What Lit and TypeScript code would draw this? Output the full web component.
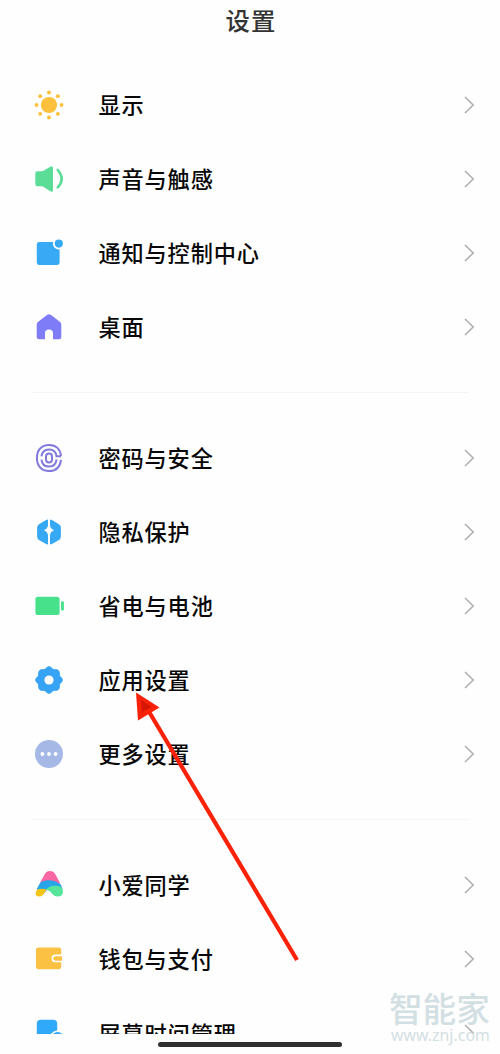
import { LitElement, html, svg, css } from "lit";
import { customElement, property } from "lit/decorators.js";

const gear = (() => {
  const pts: string[] = [];
  for (let i = 0; i < 96; i++) {
    const a = (i / 96) * Math.PI * 2;
    const r = 12.4 + 0.9 * Math.cos(8 * a);
    pts.push(`${(r * Math.cos(a)).toFixed(2)},${(r * Math.sin(a)).toFixed(2)}`);
  }
  return pts.join(" ");
})();

const icons: Record<string, unknown> = {
  display: svg`<g fill="#fcc03c"><circle r="8.1"/>${[0, 1, 2, 3, 4, 5, 6, 7].map(
    (i) => svg`<circle r="1.95" cx=${12.5 * Math.cos((i * Math.PI) / 4)} cy=${12.5 * Math.sin((i * Math.PI) / 4)}/>`
  )}</g>`,
  sound: svg`<path fill="#5bdd98" d="M-11.5-7.8H-6.5L1.3-12.3Q4-13.8 4-11V11Q4 13.8 1.3 12.3L-6.5 7.3H-11.5Q-13.7 7.3-13.7 5V-5.5Q-13.7-7.8-11.5-7.8Z"/>
    <path d="M8.8-9Q16.6 0 8.8 8.4" fill="none" stroke="#5bdd98" stroke-width="2.6" stroke-linecap="round"/>`,
  notify: svg`<rect x="-12.2" y="-11" width="22.8" height="23" rx="2.4" fill="#38a9f5"/>
    <circle cx="9.8" cy="-9.4" r="5.9" fill="#fff"/><circle cx="9.8" cy="-9.4" r="4.1" fill="#38a9f5"/>`,
  home: svg`<path fill="#7f7cf8" d="M-10.8-5.2L-2-12Q0-13.5 2-12L10.8-5.2Q12.3-4 12.3-2.2V9.8Q12.3 12.3 9.8 12.3H4V6Q4 2.4 0 2.4Q-4 2.4-4 6V12.3H-9.8Q-12.3 12.3-12.3 9.8V-2.2Q-12.3-4-10.8-5.2Z"/>`,
  finger: svg`<g fill="none" stroke="#8279dc" stroke-width="2">
    <path d="M12-1.8C11.4-8.8 7-13 0-13C-7.4-13-12.1-8-12.1 0S-7.4 13 0 13C6.8 13 11.2 9 12 1.8"/>
    <path d="M-7.6-1.6C-7-6.2-4.4-8.6 0-8.6S7-6.2 7.5-1.8H12"/>
    <path d="M-7.6 1.6C-7 6.2-4.4 8.6 0 8.6S7 6.2 7.6 1.4"/>
    <rect x="-3" y="-4.6" width="6" height="9.2" rx="3"/></g>`,
  privacy: svg`<path fill="#37a9f4" d="M-1-12.5V-6.6Q-1.8-2.9-5.2-1.8Q-1.8-.7-1 3V12.4Q-2.2 12.4-3.4 11.7L-9.6 8.2Q-11.9 6.9-11.9 4.5V-4.4Q-11.9-6.8-9.6-8.1L-3.4-11.7Q-2.2-12.4-1-12.5Z"/>
    <path fill="#37a9f4" d="M1-12.5V-6.6Q1.8-2.9 5.2-1.8Q1.8-.7 1 3V12.4Q2.2 12.4 3.4 11.7L9.6 8.2Q11.9 6.9 11.9 4.5V-4.4Q11.9-6.8 9.6-8.1L3.4-11.7Q2.2-12.4 1-12.5Z"/>`,
  battery: svg`<rect x="-13.6" y="-9.3" width="24.2" height="18.3" rx="2.6" fill="#47e08b"/><rect x="12" y="-4.8" width="2.9" height="9.2" rx="1.2" fill="#47e08b"/>`,
  apps: svg`<polygon points=${gear} fill="#37a3f4" stroke="#37a3f4" stroke-width="1" stroke-linejoin="round"/><circle r="4.6" fill="#fff"/>`,
  more: svg`<circle r="14" fill="#a6b9e6"/><g fill="#fff"><circle cx="-6.6" r="1.9"/><circle r="1.9"/><circle cx="6.6" r="1.9"/></g>`,
  assistant: svg`<path fill="#f767a4" d="M-8.8-2.5L-4.2-11Q-2.6-14 1-14T6.2-11L11.3-1.5L5-.5L-3 1Z"/>
    <path fill="#27a5e8" d="M-12.3 4L-8.8-2.2Q-6-4.8-.5-4.8Q6.5-4.8 11.8-.5L13.5 4L6 4L1 3Q-2 4-4.5 8L-9 7Z"/>
    <path fill="#f6c417" d="M-13.3 9.6Q-13.9 3.8-7.8 3.8Q-4.8 3.8-2.3 4.6Q-4.6 8.5-6.4 10.2Q-7.8 11.6-10 11.6Q-12.8 11.6-13.3 9.6Z"/>
    <path fill="#57e49b" d="M-3 4.8Q0 1.1 5 .8Q12-.2 13.9 5Q14.8 11.2 8.9 11.6Q5.6 11.8 3.4 9Q.8 5.4-3 4.8Z"/>`,
  wallet: svg`<rect x="-13" y="-11.4" width="25.2" height="21.6" rx="2.6" fill="#fbc143"/>
    <path d="M13-3.7H6.5A3.1 3.1 0 0 0 6.5 2.5H13" fill="#fbc143" stroke="#fff" stroke-width="1.7"/>`,
  screen: svg`<rect x="-12.2" y="-13.2" width="20.4" height="19" rx="4" fill="#31a9fb"/><circle cx="8.6" cy="5.2" r="7.7" fill="#fff"/><circle cx="8.6" cy="5.2" r="6.2" fill="#31a9fb"/>`,
};

@customElement("setting-row")
export class SettingRow extends LitElement {
  @property() icon = "";
  @property() label = "";

  static styles = css`
    :host {
      display: flex;
      align-items: center;
      height: 74.15px;
      padding: 0 25px 0 32px;
      flex: none;
    }
    .icon { width: 34px; height: 34px; flex: none; }
    .label {
      flex: 1;
      margin-left: 32.5px;
      padding-bottom: var(--label-lift, 2px);
      font-size: 22.2px;
      font-weight: 500;
      letter-spacing: 0.85px;
      line-height: 32px;
      white-space: nowrap;
      color: #080808;
    }
    .chevron { width: 12px; height: 20px; flex: none; }
  `;

  render() {
    return html`<svg class="icon" viewBox="-17 -17 34 34">${icons[this.icon]}</svg>
      <span class="label">${this.label}</span>
      <svg class="chevron" viewBox="0 0 12 20"><path d="M2 2L10.2 10L2 18" fill="none" stroke="#b0b0b0" stroke-width="1.6"/></svg>`;
  }
}

const groups: [string, string][][] = [
  [["display", "显示"], ["sound", "声音与触感"], ["notify", "通知与控制中心"], ["home", "桌面"]],
  [["finger", "密码与安全"], ["privacy", "隐私保护"], ["battery", "省电与电池"], ["apps", "应用设置"], ["more", "更多设置"]],
  [["assistant", "小爱同学"], ["wallet", "钱包与支付"], ["screen", "屏幕时间管理"]],
];

@customElement("app-root")
export class AppRoot extends LitElement {
  static styles = css`
    :host {
      display: block;
      position: relative;
      width: 500px;
      height: 1054px;
      overflow: hidden;
      background: #fefefe;
      font-family: "Noto Sans CJK SC", sans-serif;
    }
    .page { display: flex; flex-direction: column; height: 1034px; overflow: hidden; }
    .title {
      flex: none;
      height: 68px;
      box-sizing: border-box;
      padding: 2px 0 0 2px;
      text-align: center;
      font-size: 24.4px;
      line-height: 36px;
      font-weight: 500;
      letter-spacing: 1px;
      color: #333;
    }
    .group { display: flex; flex-direction: column; flex: none; }
    .group + .group::before {
      content: "";
      height: 1px;
      margin: 27.5px 32px;
      background: #f5f5f5;
    }
    .group:last-child::before { margin-bottom: 28.2px; }
    .group:last-child setting-row:last-child { --label-lift: 0px; }
    .handle {
      position: absolute;
      left: 158px;
      top: 1042px;
      width: 184px;
      height: 4.5px;
      border-radius: 3px;
      background: #303030;
    }
    .arrow { position: absolute; left: 0; top: 0; }
    .mark {
      position: absolute;
      left: 389px;
      top: 989px;
      width: 104px;
      color: #d3e0e3;
      white-space: nowrap;
    }
    .brand { font-size: 33.6px; line-height: 37px; font-weight: 500; }
    .site { font: 15.8px/18px "Noto Sans", sans-serif; letter-spacing: 0.05px; margin-left: 2px; }
  `;

  render() {
    return html`
      <div class="mark"><div class="brand">智能家</div><div class="site">www.znj.com</div></div>
      <div class="page">
        <div class="title">设置</div>
        ${groups.map(
          (g) => html`<div class="group">
            ${g.map(([icon, label]) => html`<setting-row .icon=${icon} .label=${label}></setting-row>`)}
          </div>`
        )}
      </div>
      <div class="handle"></div>
      <svg class="arrow" width="500" height="1054" viewBox="0 0 500 1054">
        <path d="M148 710L297 960" stroke="#f92208" stroke-width="4.2"/>
        <path d="M136 692.5L159.5 707.5L138 720.5Z" fill="#f92208"/>
        <path d="M141 700L152 707L142 712Z" fill="#d51505"/>
      </svg>
    `;
  }
}
